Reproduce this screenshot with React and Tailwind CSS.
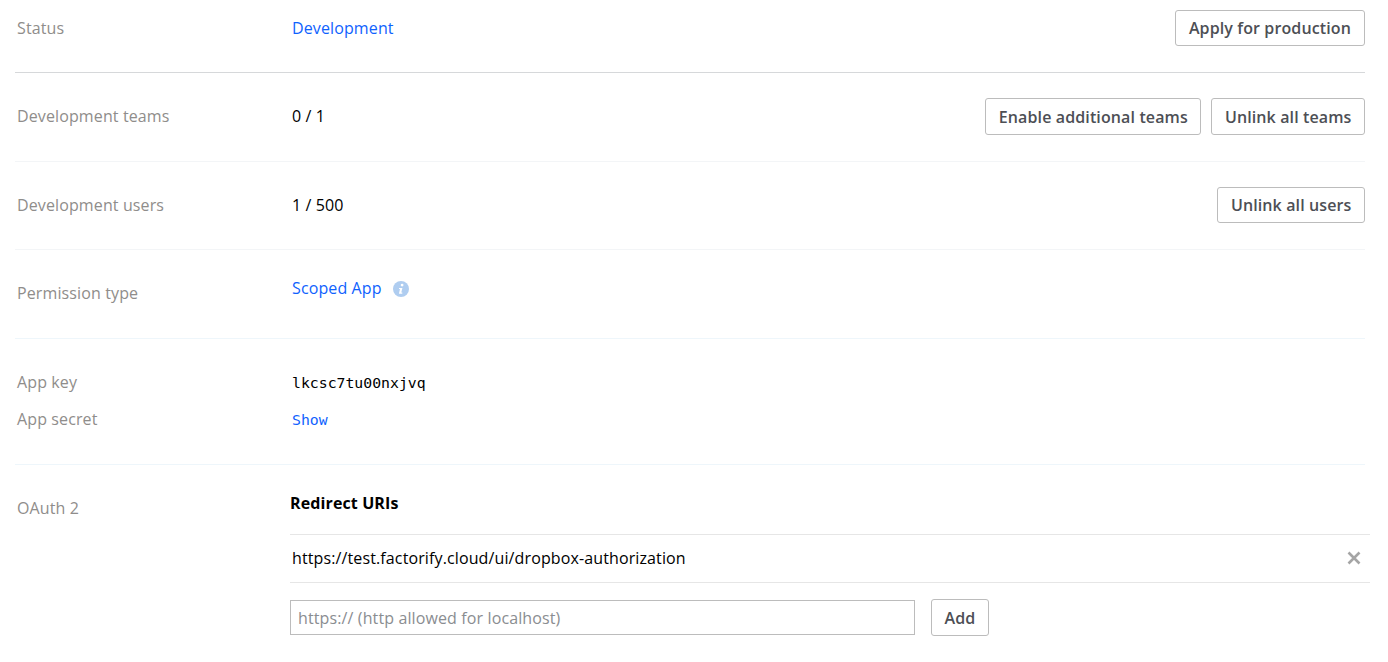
import React from 'react';

const btn =
  'bg-white border border-[#bcbcbc] rounded-[3px] text-[16px] font-semibold text-[#4d4f55] whitespace-nowrap';

const Row = ({ label, height, labelTop, children, actions, line = 'border-[#f3f5f7]' }) => (
  <div className={`flex border-b ${line} ${height}`}>
    <div className={`w-[277px] pl-[2px] text-[#8f8d8b] ${labelTop}`}>{label}</div>
    <div className="flex-1 min-w-0">{children}</div>
    {actions && <div className="flex gap-[10px] items-start">{actions}</div>}
  </div>
);

const App = () => {
  return (
    <div className="h-[662px] w-[1388px] overflow-hidden bg-white pl-[15px] pr-[23px] font-['Open_Sans',sans-serif] text-[16px] leading-[24px] tracking-[0.12px] text-black">
      {/* Status */}
      <Row
        label="Status"
        height="h-[73px]"
        labelTop="pt-[16px]"
        line="border-[#d6d8da]"
        actions={<button className={`${btn} h-[36px] px-[13px] mt-[10px]`}>Apply for production</button>}
      >
        <div className="pt-[16px] text-[#0f62fe]">Development</div>
      </Row>

      <Row
        label="Development teams"
        height="h-[89px]"
        labelTop="pt-[31px]"
        actions={
          <>
            <button className={`${btn} h-[37px] px-[12.5px] mt-[25px]`}>Enable additional teams</button>
            <button className={`${btn} h-[37px] px-[12.5px] mt-[25px]`}>Unlink all teams</button>
          </>
        }
      >
        <div className="pt-[31px]">0 / 1</div>
      </Row>

      <Row
        label="Development users"
        height="h-[88px]"
        labelTop="pt-[31px]"
        actions={<button className={`${btn} h-[36px] px-[12.5px] mt-[25px]`}>Unlink all users</button>}
      >
        <div className="pt-[31px]">1 / 500</div>
      </Row>

      <Row label="Permission type" height="h-[89px]" labelTop="pt-[31px]" line="border-[#eef6fb]">
        <div className="pt-[26px] flex items-center gap-[11px] text-[#0f62fe]">
          <span>Scoped App</span>
          <svg className="mt-[2px]" width="16" height="16" viewBox="0 0 16 16">
            <circle cx="8" cy="8" r="8" fill="#afcdf0" />
            <circle cx="9.1" cy="4.1" r="1.4" fill="#fff" />
            <path d="M6.1 6.9h3.3l-1.1 4.6h1v1.2H5.9l1.1-4.7H6z" fill="#fff" />
          </svg>
        </div>
      </Row>

      <div className="h-[126px] border-b border-[#eef6fb] pt-[31px]">
        <div className="flex h-[37px]">
          <div className="w-[277px] pl-[2px] text-[#8f8d8b]">App key</div>
          <div className="pt-px font-['DejaVu_Sans_Mono',monospace] text-[14.8px] tracking-normal text-black">lkcsc7tu00nxjvq</div>
        </div>
        <div className="flex h-[37px]">
          <div className="w-[277px] pl-[2px] text-[#8f8d8b]">App secret</div>
          <div className="pt-px font-['DejaVu_Sans_Mono',monospace] text-[14.8px] tracking-normal text-[#0f62fe]">Show</div>
        </div>
      </div>

      {/* OAuth 2 */}
      <div className="flex">
        <div className="w-[275px] shrink-0 pl-[2px] pt-[31px] text-[#8f8d8b]">OAuth 2</div>
        <div className="w-[1080px] shrink-0">
          <div className="h-[69px] pt-[26px] font-bold">Redirect URIs</div>
          <div className="flex h-[49px] items-center justify-between border-y border-[#e6e6e6] pb-[1px] pl-[2px] pr-[9px]">
            <span>https://test.factorify.cloud/ui/dropbox-authorization</span>
            <svg width="14" height="14" viewBox="0 0 14 14">
              <path d="M1.5 1.5l11 11M12.5 1.5l-11 11" stroke="#a5a5a5" strokeWidth="2.6" />
            </svg>
          </div>
          <div className="mt-[16px] flex items-center gap-[16px]">
            <input
              placeholder="https:// (http allowed for localhost)"
              className="h-[35px] w-[625px] border border-[#bcbcbc] px-[7px] tracking-[0.12px] outline-none placeholder:text-[#8a8d91]"
            />
            <button className={`${btn} h-[37px] px-[12.5px]`}>Add</button>
          </div>
        </div>
      </div>
    </div>
  );
};

export default App;
